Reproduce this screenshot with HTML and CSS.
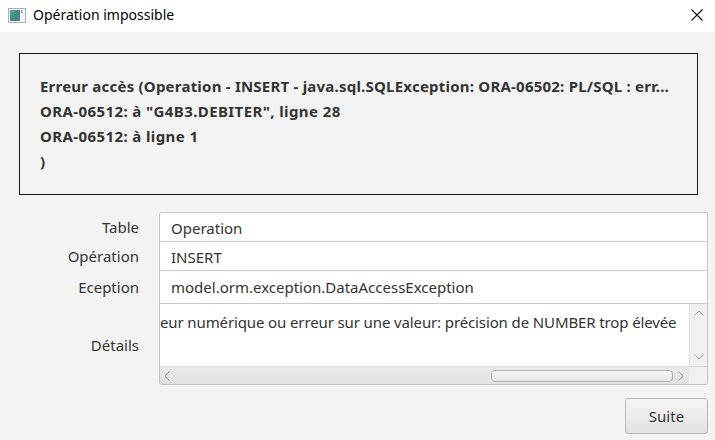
FILE: index.html
```html
<!DOCTYPE html>
<html lang="fr">
<head>
<meta charset="utf-8">
<title>Opération impossible</title>
<link rel="stylesheet" href="styles.css">
</head>
<body>
<div class="window">
  <div class="titlebar">
    <svg class="appicon" width="18" height="15" viewBox="0 0 18 15">
      <defs>
        <linearGradient id="g" x1="0" y1="0" x2="1" y2="1">
          <stop offset="0" stop-color="#5aa0b0"/>
          <stop offset="0.5" stop-color="#3f8f7a"/>
          <stop offset="1" stop-color="#4a7fb0"/>
        </linearGradient>
      </defs>
      <rect x="0.5" y="0.5" width="17" height="14" fill="#f4f6f8" stroke="#a9b0b8"/>
      <rect x="2" y="2" width="10" height="11" fill="url(#g)"/>
      <rect x="13" y="2" width="1.5" height="3" fill="#7fa0b8"/>
    </svg>
    <span class="title">Opération impossible</span>
    <svg class="close" width="12" height="12" viewBox="0 0 12 12">
      <path d="M0.5 0.5 L11.5 11.5 M11.5 0.5 L0.5 11.5" stroke="#111" stroke-width="1.1" fill="none"/>
    </svg>
  </div>
  <div class="content">
    <div class="errorbox">
      <div class="line first-line">Erreur accès (Operation - INSERT - java.sql.SQLException: ORA-06502: PL/SQL : err...</div>
      <div class="line">ORA-06512: à "G4B3.DEBITER", ligne 28</div>
      <div class="line">ORA-06512: à ligne 1</div>
      <div class="line">)</div>
    </div>
    <div class="form">
      <label class="lbl">Table</label>
      <div class="field first">Operation</div>
      <label class="lbl">Opération</label>
      <div class="field">INSERT</div>
      <label class="lbl">Eception</label>
      <div class="field tall">model.orm.exception.DataAccessException</div>
      <label class="lbl">Détails</label>
      <div class="textarea">
        <div class="ta-main">
          <div class="ta-text">eur numérique ou erreur sur une valeur: précision de NUMBER trop élevée</div>
          <div class="vscroll">
            <svg width="10" height="6" viewBox="0 0 10 6"><path d="M0.5 5.5 L5 1 L9.5 5.5" stroke="#9a9a9a" fill="none"/></svg>
            <svg width="10" height="6" viewBox="0 0 10 6"><path d="M0.5 0.5 L5 5 L9.5 0.5" stroke="#9a9a9a" fill="none"/></svg>
          </div>
        </div>
        <div class="hscroll">
          <svg class="harrow" width="6" height="10" viewBox="0 0 6 10"><path d="M5.5 0.5 L1 5 L5.5 9.5" stroke="#8a8a8a" fill="none"/></svg>
          <div class="track"><div class="thumb"></div></div>
          <svg class="harrow" width="6" height="10" viewBox="0 0 6 10"><path d="M0.5 0.5 L5 5 L0.5 9.5" stroke="#9a9a9a" fill="none"/></svg>
          <div class="corner"></div>
        </div>
      </div>
    </div>
    <div class="actions">
      <button class="btn">Suite</button>
    </div>
  </div>
</div>
</body>
</html>
```

FILE: styles.css
```css
* { box-sizing: border-box; }
html, body { margin: 0; padding: 0; }
body {
  width: 715px;
  height: 440px;
  overflow: hidden;
  background: #f3f3f3;
  font-family: "Noto Sans", "Open Sans", sans-serif;
  color: #333;
}
.window { width: 715px; height: 440px; display: flex; flex-direction: column; }
.titlebar {
  height: 32px;
  background: #fff;
  display: flex;
  align-items: center;
  padding: 0 12px 0 8px;
}
.appicon { margin-top: -2px; }
.title {
  margin-left: 7px;
  font-size: 14px;
  color: #000;
  flex: 1;
  margin-top: -3px;
}
.close { margin-top: -3px; }
.content {
  flex: 1;
  padding: 21px 7px 0 19px;
  display: flex;
  flex-direction: column;
}
.errorbox {
  margin-right: 10px;
  border: 1px solid #1a1a1a;
  height: 142px;
  padding: 20px 16px 0 20px;
  font-weight: bold;
  font-size: 15px;
  letter-spacing: 0.4px;
  line-height: 25px;
  color: #333;
}
.line { white-space: nowrap; }
.first-line { letter-spacing: 0.22px; }
.form {
  margin-top: 17px;
  display: grid;
  grid-template-columns: 120px 1fr;
  column-gap: 20px;
  align-items: center;
  font-size: 15px;
}
.lbl { text-align: right; color: #333; }
.field {
  height: 29px;
  background: #fff;
  border: 1px solid #c9c9c9;
  border-bottom: none;
  padding: 5px 0 0 11px;
  color: #333;
  white-space: nowrap;
}
.field.first { border-radius: 3px 3px 0 0; }
.field.tall { height: 34px; border-bottom: 1px solid #c9c9c9; padding-top: 6px; }
.textarea {
  height: 81px;
  background: #fff;
  border: 1px solid #c4c4c4;
  border-top: none;
  border-radius: 0 0 3px 3px;
  display: flex;
  flex-direction: column;
  overflow: hidden;
}
.ta-main { flex: 1; display: flex; min-height: 0; }
.ta-text {
  flex: 1;
  white-space: nowrap;
  padding: 8px 0 0 0;
  color: #333;
  letter-spacing: -0.12px;
}
.vscroll {
  width: 18px;
  background: #f0f0f0;
  border-left: 1px solid #e2e2e2;
  display: flex;
  flex-direction: column;
  justify-content: space-between;
  align-items: center;
  padding: 6px 0 6px 0;
}
.hscroll {
  height: 18px;
  background: linear-gradient(#eaeaea, #e2e2e2);
  border-top: 1px solid #dadada;
  display: flex;
  align-items: center;
}
.harrow { margin: 0 5px; flex: none; }
.harrow:first-child { margin-left: 4px; }
.track { flex: 1; display: flex; justify-content: flex-end; }
.thumb {
  width: 182px;
  height: 12px;
  border: 1px solid #b4b4b4;
  border-radius: 4px;
  background: linear-gradient(#f7f7f7, #e6e6e6);
}
.corner { width: 18px; align-self: stretch; background: #f0f0f0; }
.actions {
  display: flex;
  justify-content: flex-end;
  margin-top: 13px;
}
.btn {
  width: 83px;
  height: 36px;
  font-family: inherit;
  font-size: 15px;
  color: #333;
  border: 1px solid #b8b8b8;
  border-radius: 3px;
  background: linear-gradient(#f5f5f5, #e2e2e2);
  padding: 0;
}
```
